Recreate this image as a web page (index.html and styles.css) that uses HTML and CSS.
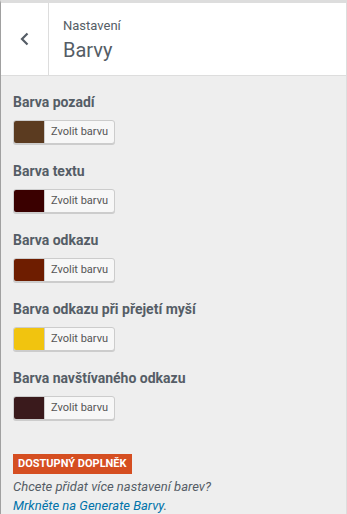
FILE: index.html
```html
<!DOCTYPE html>
<html lang="cs">
<head>
    <meta charset="UTF-8">
    <meta name="viewport" content="width=device-width, initial-scale=1.0">
    <title>Nastavení - Barvy</title>
    <link rel="stylesheet" href="styles.css">
</head>
<body>

<div class="panel">
    <!-- Section header -->
    <div class="section-header">
        <button class="back-btn" aria-label="Zpět">
            <svg width="9" height="14" viewBox="0 0 9 14">
                <path d="M7.5 1.5 L2 7 L7.5 12.5" fill="none" stroke="#555d66" stroke-width="2.2"/>
            </svg>
        </button>
        <div class="section-title">
            <span class="customize-action">Nastavení</span>
            <h3>Barvy</h3>
        </div>
    </div>

    <!-- Colour controls -->
    <div class="controls">
        <div class="control">
            <span class="control-title">Barva pozadí</span>
            <button class="color-result">
                <span class="swatch" style="background-color: #5b3b20;"></span>
                <span class="color-text">Zvolit barvu</span>
            </button>
        </div>

        <div class="control">
            <span class="control-title">Barva textu</span>
            <button class="color-result">
                <span class="swatch" style="background-color: #3a0000;"></span>
                <span class="color-text">Zvolit barvu</span>
            </button>
        </div>

        <div class="control">
            <span class="control-title">Barva odkazu</span>
            <button class="color-result">
                <span class="swatch" style="background-color: #6e1d00;"></span>
                <span class="color-text">Zvolit barvu</span>
            </button>
        </div>

        <div class="control">
            <span class="control-title">Barva odkazu při přejetí myší</span>
            <button class="color-result">
                <span class="swatch" style="background-color: #f1c40f;"></span>
                <span class="color-text">Zvolit barvu</span>
            </button>
        </div>

        <div class="control">
            <span class="control-title">Barva navštívaného odkazu</span>
            <button class="color-result">
                <span class="swatch" style="background-color: #3a1a1c;"></span>
                <span class="color-text">Zvolit barvu</span>
            </button>
        </div>

        <!-- Addon notice -->
        <div class="addon">
            <span class="badge">Dostupný doplněk</span>
            <p class="addon-text">
                Chcete přidat více nastavení barev?<br>
                <a href="#">Mrkněte na Generate Barvy</a>.
            </p>
        </div>
    </div>
</div>

</body>
</html>
```

FILE: styles.css
```css
body {
    font-family: Roboto, 'Liberation Sans', sans-serif;
    background-color: #eee;
    margin: 0;
    padding: 0;
}

.panel {
    min-height: 514px;
    box-sizing: border-box;
    border-left: 1px solid #a0a0a0;
    border-right: 1px solid #ddd;
    border-top: 3px solid #ddd;
    color: #555d66;
}

.section-header {
    display: flex;
    background-color: #fff;
    border-bottom: 1px solid #ddd;
    height: 72px;
}

.back-btn {
    width: 48px;
    flex: none;
    background: none;
    border: none;
    border-right: 1px solid #ddd;
    padding: 0;
    display: flex;
    align-items: center;
    justify-content: center;
    cursor: pointer;
}

.section-title {
    padding: 14px 14px 0;
}

.customize-action {
    display: block;
    font-size: 13px;
    line-height: 18px;
}

.section-title h3 {
    margin: 2px 0 0;
    font-size: 20px;
    font-weight: 400;
    line-height: 26px;
}

.controls {
    padding: 16px 12px 0;
}

.control {
    margin-bottom: 17px;
}

.control-title {
    display: block;
    font-size: 14px;
    font-weight: 700;
    line-height: 20px;
    margin-bottom: 8px;
}

.color-result {
    display: flex;
    height: 24px;
    padding: 0;
    border: 1px solid #ccc;
    border-radius: 3px;
    background-color: #f7f7f7;
    box-shadow: 0 1px 0 #ccc;
    overflow: hidden;
    cursor: pointer;
    font-family: inherit;
}

.swatch {
    width: 30px;
    height: 100%;
    border-right: 1px solid #ccc;
}

.color-text {
    padding: 0 6px;
    font-size: 11px;
    line-height: 22px;
    color: #555;
}

.addon {
    padding-top: 15px;
}

.badge {
    display: inline-block;
    background-color: #d54e21;
    color: #fff;
    font-size: 11px;
    font-weight: 700;
    text-transform: uppercase;
    line-height: 20px;
    padding: 0 5px;
}

.addon-text {
    margin: 3px 0 0;
    font-size: 13px;
    font-style: italic;
    line-height: 19px;
}

.addon-text a {
    color: #0073aa;
    text-decoration: none;
}
```
